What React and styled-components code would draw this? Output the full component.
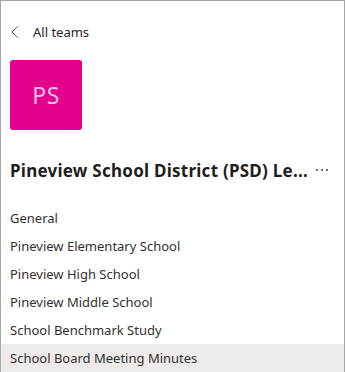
import React from "react";
import styled, { createGlobalStyle } from "styled-components";

const Global = createGlobalStyle`
  html, body { margin: 0; padding: 0; background: #fff; }
  body { font-family: "Segoe UI", "Noto Sans", "Open Sans", sans-serif; color: #252423; }
  * { box-sizing: border-box; }
`;

const Panel = styled.div`
  width: 345px;
  height: 372px;
  border: 1px solid #a6a6a6;
  border-bottom: none;
  overflow: hidden;
  display: flex;
  flex-direction: column;
  background: #fff;
`;

const BackRow = styled.div`
  display: flex;
  align-items: center;
  gap: 14px;
  padding: 21px 0 0 10px;
  height: 41px;
  font-size: 13px;
  color: #252423;
`;

const Avatar = styled.div`
  margin: 18px 0 0 9px;
  width: 72px;
  height: 72px;
  border-radius: 3px;
  background: #e3008c;
  color: #f7c4e4;
  font-size: 23px;
  display: flex;
  align-items: center;
  justify-content: center;
  letter-spacing: 0.5px;
`;

const TitleRow = styled.div`
  display: flex;
  align-items: center;
  padding: 0 0 0 9px;
  margin-top: 27px;
  height: 26px;
`;

const Title = styled.div`
  font-weight: 700;
  font-size: 17px;
  white-space: nowrap;
  color: #1f1e1d;
  letter-spacing: 0.25px;
`;

const More = styled.div`
  margin-left: 8px;
  display: flex;
  gap: 3px;
  align-items: center;
`;

const Dot = styled.span`
  width: 2px;
  height: 2px;
  border-radius: 50%;
  background: #424242;
`;

const List = styled.div`
  margin-top: 21px;
  display: flex;
  flex-direction: column;
`;

const Item = styled.div`
  height: 28px;
  display: flex;
  align-items: center;
  padding-left: 9px;
  font-size: 13px;
  color: #323130;
  background: ${(p) => (p.$active ? "#edebe9" : "transparent")};
`;

const items = [
  "General",
  "Pineview Elementary School",
  "Pineview High School",
  "Pineview Middle School",
  "School Benchmark Study",
  "School Board Meeting Minutes",
];

export default function App() {
  return (
    <>
      <Global />
      <Panel>
        <BackRow>
          <svg width="8" height="12" viewBox="0 0 8 12" fill="none">
            <path d="M6.5 0.5 L1 6 L6.5 11.5" stroke="#605e5c" strokeWidth="1" />
          </svg>
          <span>All teams</span>
        </BackRow>
        <Avatar>PS</Avatar>
        <TitleRow>
          <Title>Pineview School District (PSD) Le...</Title>
          <More>
            <Dot />
            <Dot />
            <Dot />
          </More>
        </TitleRow>
        <List>
          {items.map((t, i) => (
            <Item key={t} $active={i === items.length - 1}>
              {t}
            </Item>
          ))}
        </List>
      </Panel>
    </>
  );
}
